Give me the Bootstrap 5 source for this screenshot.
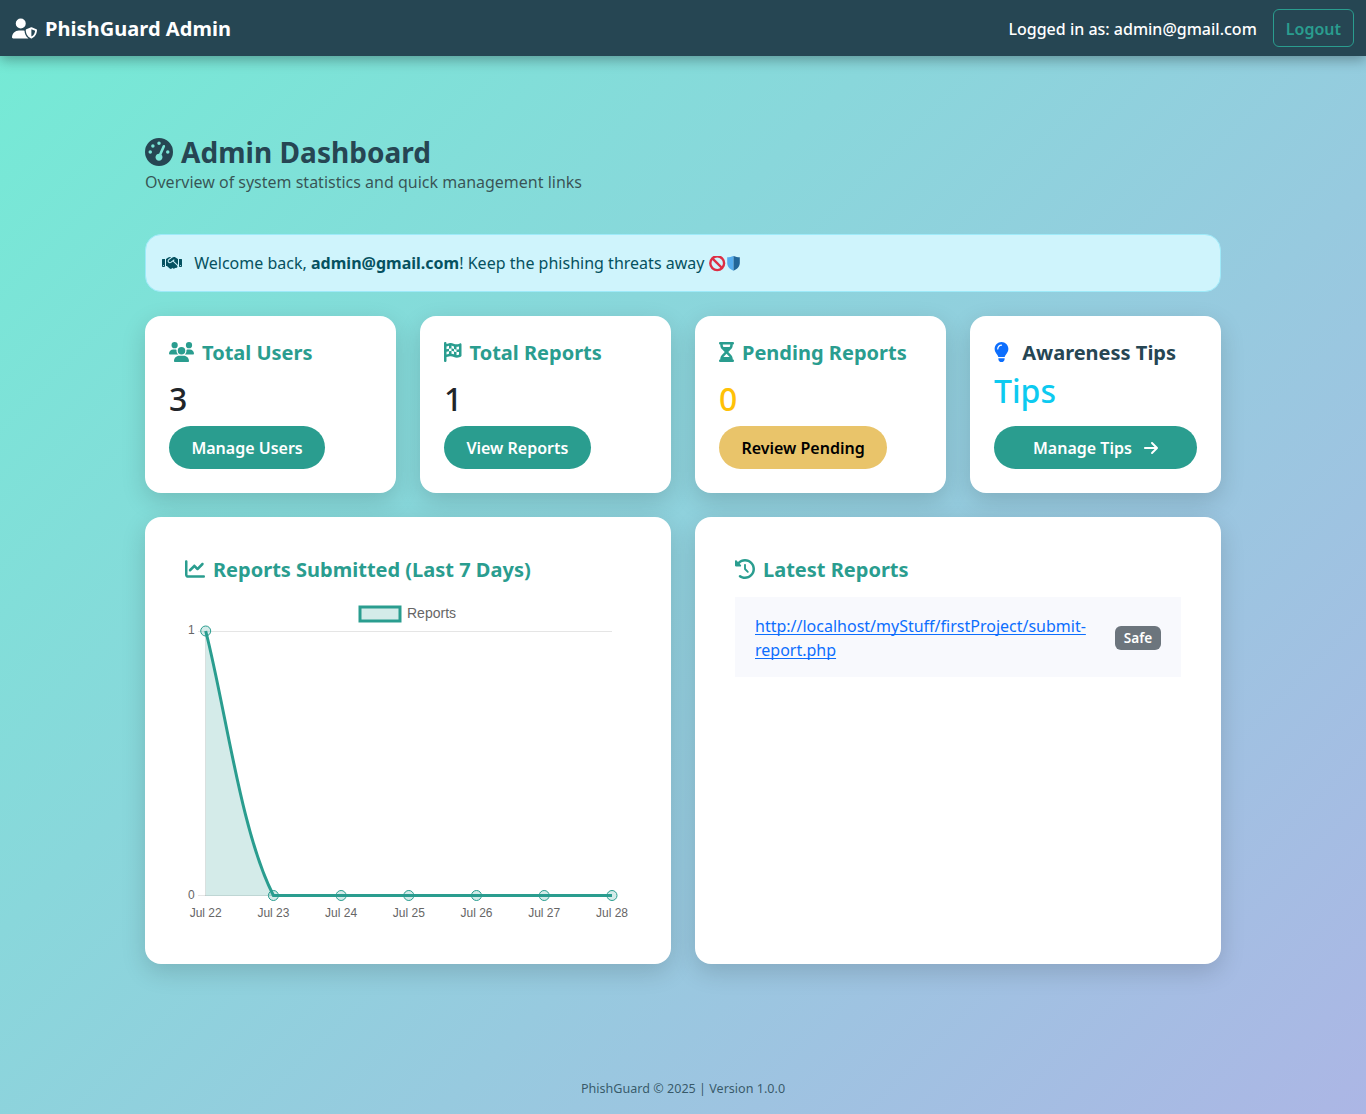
<!DOCTYPE html>
<html lang="en">
<head>
<meta charset="utf-8">
<meta name="viewport" content="width=device-width, initial-scale=1">
<title>PhishGuard Admin</title>
<link rel="stylesheet" href="https://cdn.jsdelivr.net/npm/bootstrap@5.3.0/dist/css/bootstrap.min.css">
<style>
  body { font-family: "Noto Sans", sans-serif; background: linear-gradient(135deg, #74ebd5, #acb6e5); min-height: 1114px; }
  .topbar { background: #264653; box-shadow: 0 4px 12px rgba(0,0,0,.3); height: 56px; }
  .topbar .navbar-brand { padding: 6px 0 4px; letter-spacing: .05px; }
  .topbar .fa { transform: translateY(-.5px); }
  .session-user { font-weight: 500; padding-top: 2px; }
  .fa { height: 1em; width: auto; fill: currentColor; vertical-align: -.125em; overflow: visible; display: inline-block; }
  h1 .fa { vertical-align: calc(-.125em + 1px); }
  h5 .fa { transform: translateY(-1px); }
  .emoji { height: 16px; width: auto; vertical-align: -3px; margin-left: .2px; }
  .btn-exit { color: #2a9d8f; border-color: #2a9d8f; font-weight: 600; padding-top: 7px; padding-bottom: 5px; }
  .page { max-width: 1100px; padding-top: 76px; }
  .page-title { color: #264653; font-size: 28px; font-weight: 700; line-height: 36px; margin: 0; padding-top: 2px; letter-spacing: .05px; }
  .subtitle { color: rgba(33,37,41,.75); margin-bottom: 40px; line-height: 24px; }
  .alert { border-radius: 16px; padding: 16px; margin-bottom: 24px; line-height: 24px; color: #055160; letter-spacing: .01px; }
  .panel { border: 0; border-radius: 16px; box-shadow: 0 8px 24px rgba(0,0,0,.15); padding: 24px; }
  .stat { height: 177px; }
  .tall { height: 447px; padding: 40px; }
  .panel h5 { color: #2a9d8f; font-weight: 700; font-size: 20px; line-height: 22px; height: 24px; padding-top: 2px; margin-bottom: 16px; white-space: nowrap; }
  .panel h5.tips-title { color: #264653; }
  .panel h2 { font-size: 32px; font-weight: 500; line-height: 38px; margin-bottom: 8px; }
  .btn-pill { height: 43px; border: 0; border-radius: 30px; padding: 0 22.4px; font-weight: 600; background: #2a9d8f; color: #fff; }
  .btn-gold { background: #e9c46a; color: #000; }
  .report { background: #f8f9fd; border: 0; padding: 17px 20px 15px; }
  .report a { text-decoration-skip-ink: none; text-underline-offset: 2px; text-decoration-thickness: 1px; }
  .safe-tag { font-size: 13.6px; font-weight: 600; }
  .chart text { font-family: "Liberation Sans", sans-serif; font-size: 12px; fill: #666; }
  footer { padding-top: 115px; font-size: 12.58px; line-height: 20px; color: rgba(38,70,83,.85); }
</style>
<script src="https://cdn.jsdelivr.net/npm/bootstrap@5.3.0/dist/js/bootstrap.bundle.min.js"></script>
</head>
<body>
<nav class="navbar topbar px-0">
  <div class="container-fluid">
    <a class="navbar-brand text-white fw-bold" href="#"><svg class="fa me-2" viewBox="0 0 640 512"><path d="M224 256A128 128 0 1 0 224 0a128 128 0 1 0 0 256zm-45.7 48C79.8 304 0 383.8 0 482.3C0 498.7 13.3 512 29.7 512l388.6 0c1.8 0 3.5-.2 5.3-.5c-76.3-55.1-99.8-141-103.1-200.2c-16.1-4.8-33.1-7.3-50.7-7.3l-91.4 0zm308.8-78.3l-120 48C358 277.4 352 286.2 352 296c0 63.3 25.9 168.8 134.8 214.2c5.9 2.5 12.6 2.5 18.5 0C614.1 464.8 640 359.3 640 296c0-9.8-6-18.6-15.1-22.3l-120-48c-5.7-2.3-12.1-2.3-17.8 0zM591.4 312c-3.9 50.7-27.2 116.7-95.4 149.7l0-187.8L591.4 312z"/></svg>PhishGuard Admin</a>
    <div class="d-flex align-items-center">
      <span class="text-white session-user me-3">Logged in as: admin@gmail.com</span>
      <a class="btn btn-exit" href="#">Logout</a>
    </div>
  </div>
</nav>

<main class="container page">
  <h1 class="page-title"><svg class="fa me-2" viewBox="0 0 512 512"><path d="M0 256a256 256 0 1 1 512 0A256 256 0 1 1 0 256zM288 96a32 32 0 1 0 -64 0 32 32 0 1 0 64 0zM256 416c35.3 0 64-28.7 64-64c0-17.4-6.9-33.1-18.1-44.6L366 161.7c5.3-12.1-.2-26.3-12.3-31.6s-26.3 .2-31.6 12.3L257.9 288c-.6 0-1.3 0-1.9 0c-35.3 0-64 28.7-64 64s28.7 64 64 64zM176 144a32 32 0 1 0 -64 0 32 32 0 1 0 64 0zM96 288a32 32 0 1 0 0-64 32 32 0 1 0 0 64zm352-32a32 32 0 1 0 -64 0 32 32 0 1 0 64 0z"/></svg>Admin Dashboard</h1>
  <p class="subtitle">Overview of system statistics and quick management links</p>

  <div class="alert alert-info"><svg class="fa me-2" viewBox="0 0 640 512"><path d="M323.4 85.2l-96.8 78.4c-16.1 13-19.2 36.4-7 53.1c12.9 17.8 38 21.3 55.3 7.8l99.3-77.2c7-5.4 17-4.2 22.5 2.8s4.2 17-2.8 22.5l-20.9 16.2L512 316.8 512 128l-.7 0-3.9-2.5L434.8 79c-15.3-9.8-33.2-15-51.4-15c-21.8 0-43 7.5-60 21.2zm22.8 124.4l-51.7 40.2C263 274.3 217.3 268 193.7 235.6c-22.2-30.5-16.6-73.1 12.7-96.8l83.2-67.3c-11.6-4.9-24.1-7.4-36.8-7.4C234 64 215.7 69.6 200 80l-72 48 0 224 28.2 0 91.4 83.4c19.6 17.9 49.9 16.5 67.8-3.1c5.5-6.1 9.2-13.2 11.1-20.6l17 15.6c19.5 17.9 49.9 16.6 67.8-2.9c4.5-4.9 7.8-10.6 9.9-16.5c19.4 13 45.8 10.3 62.1-7.5c17.9-19.5 16.6-49.9-2.9-67.8l-134.2-123zM16 128c-8.8 0-16 7.2-16 16L0 352c0 17.7 14.3 32 32 32l32 0c17.7 0 32-14.3 32-32l0-224-80 0zM48 320a16 16 0 1 1 0 32 16 16 0 1 1 0-32zM544 128l0 224c0 17.7 14.3 32 32 32l32 0c17.7 0 32-14.3 32-32l0-208c0-8.8-7.2-16-16-16l-80 0zm32 208a16 16 0 1 1 32 0 16 16 0 1 1 -32 0z"/></svg> Welcome back, <strong>admin@gmail.com</strong>! Keep the phishing threats away <svg class="emoji" viewBox="0 0 32 16"><g fill="none" stroke="#dd2e44" stroke-width="2.4"><circle cx="8.2" cy="7.2" r="6.9"/><path d="M3.4 2.4l9.6 9.6"/></g><path d="M24.5-.1c-2 1-4 1.300-6.300 1.300v5.500c0 3.800 2.300 6.200 6.300 8z" fill="#55acee"/><path d="M24.500-.1c2 1 4 1.300 6.300 1.300v5.500c0 3.800-2.300 6.200-6.300 8z" fill="#226699"/></svg></div>

  <div class="row g-4">
    <div class="col-3">
      <div class="card panel stat align-items-start">
        <h5><svg class="fa me-2" viewBox="0 0 640 512"><path d="M144 0a80 80 0 1 1 0 160A80 80 0 1 1 144 0zM512 0a80 80 0 1 1 0 160A80 80 0 1 1 512 0zM0 298.7C0 239.8 47.8 192 106.7 192l42.7 0c15.9 0 31 3.5 44.6 9.7c-1.3 7.2-1.9 14.7-1.9 22.3c0 38.2 16.8 72.5 43.3 96c-.2 0-.4 0-.7 0L21.3 320C9.6 320 0 310.4 0 298.7zM405.3 320c-.2 0-.4 0-.7 0c26.6-23.5 43.3-57.8 43.3-96c0-7.6-.7-15-1.9-22.3c13.6-6.3 28.7-9.7 44.6-9.7l42.7 0C592.2 192 640 239.8 640 298.7c0 11.8-9.6 21.3-21.3 21.3l-213.3 0zM224 224a96 96 0 1 1 192 0 96 96 0 1 1 -192 0zM128 485.3C128 411.7 187.7 352 261.3 352l117.3 0C452.3 352 512 411.7 512 485.3c0 14.7-11.9 26.7-26.7 26.7l-330.7 0c-14.7 0-26.7-11.9-26.7-26.7z"/></svg>Total Users</h5>
        <h2>3</h2>
        <button class="btn btn-pill">Manage Users</button>
      </div>
    </div>
    <div class="col-3">
      <div class="card panel stat align-items-start">
        <h5><svg class="fa me-2" viewBox="0 0 448 512"><path d="M32 0C49.7 0 64 14.3 64 32l0 16 69-17.2c38.1-9.5 78.3-5.1 113.5 12.5c46.3 23.2 100.8 23.2 147.1 0l9.6-4.8C423.8 28.1 448 43.1 448 66.1l0 279.7c0 13.3-8.3 25.3-20.8 30l-34.7 13c-46.2 17.3-97.6 14.6-141.7-7.4c-37.9-19-81.3-23.7-122.5-13.4L64 384l0 96c0 17.7-14.3 32-32 32s-32-14.3-32-32l0-80 0-66L0 64 0 32C0 14.3 14.3 0 32 0zM64 187.1l64-13.9 0 65.5L64 252.6 64 318l48.8-12.2c5.1-1.3 10.1-2.4 15.2-3.3l0-63.9 38.9-8.4c8.3-1.8 16.7-2.5 25.1-2.1l0-64c13.6 .4 27.2 2.6 40.4 6.4l23.6 6.9 0 66.7-41.7-12.3c-7.3-2.1-14.8-3.4-22.3-3.8l0 71.4c21.8 1.9 43.3 6.7 64 14.4l0-69.8 22.7 6.7c13.5 4 27.3 6.4 41.3 7.4l0-64.2c-7.8-.8-15.6-2.3-23.2-4.5l-40.8-12 0-62c-13-3.8-25.8-8.8-38.2-15c-8.2-4.1-16.9-7-25.8-8.8l0 72.4c-13-.4-26 .8-38.7 3.6L128 173.2 128 98 64 114l0 73.1zM320 335.7c16.8 1.5 33.9-.7 50-6.8l14-5.2 0-71.7-7.9 1.8c-18.4 4.3-37.3 5.7-56.1 4.5l0 77.4zm64-149.4l0-70.8c-20.9 6.1-42.4 9.1-64 9.1l0 69.4c13.9 1.4 28 .5 41.7-2.6l22.3-5.2z"/></svg>Total Reports</h5>
        <h2>1</h2>
        <button class="btn btn-pill">View Reports</button>
      </div>
    </div>
    <div class="col-3">
      <div class="card panel stat align-items-start">
        <h5><svg class="fa me-2" viewBox="0 0 384 512"><path d="M32 0C14.3 0 0 14.3 0 32S14.3 64 32 64l0 11c0 42.4 16.9 83.1 46.9 113.1L146.7 256 78.9 323.9C48.9 353.9 32 394.6 32 437l0 11c-17.7 0-32 14.3-32 32s14.3 32 32 32l32 0 256 0 32 0c17.7 0 32-14.3 32-32s-14.3-32-32-32l0-11c0-42.4-16.9-83.1-46.9-113.1L237.3 256l67.9-67.9c30-30 46.9-70.7 46.9-113.1l0-11c17.7 0 32-14.3 32-32s-14.3-32-32-32L320 0 64 0 32 0zM96 75l0-11 192 0 0 11c0 19-5.6 37.4-16 53L112 128c-10.3-15.6-16-34-16-53zm16 309c3.5-5.3 7.6-10.3 12.1-14.9L192 301.3l67.9 67.9c4.6 4.6 8.6 9.6 12.1 14.9L112 384z"/></svg>Pending Reports</h5>
        <h2 class="text-warning">0</h2>
        <button class="btn btn-pill btn-gold">Review Pending</button>
      </div>
    </div>
    <div class="col-3">
      <div class="card panel stat">
        <h5 class="tips-title mb-2"><svg class="fa me-2 text-primary" viewBox="0 0 384 512"><path d="M272 384c9.6-31.9 29.5-59.1 49.2-86.2c0 0 0 0 0 0c5.2-7.1 10.4-14.2 15.4-21.4c19.8-28.5 31.4-63 31.4-100.3C368 78.8 289.2 0 192 0S16 78.8 16 176c0 37.3 11.6 71.9 31.4 100.3c5 7.2 10.2 14.3 15.4 21.4c0 0 0 0 0 0c19.8 27.1 39.7 54.4 49.2 86.2l160 0zM192 512c44.2 0 80-35.8 80-80l0-16-160 0 0 16c0 44.2 35.8 80 80 80zM112 176c0 8.8-7.2 16-16 16s-16-7.2-16-16c0-61.9 50.1-112 112-112c8.8 0 16 7.2 16 16s-7.2 16-16 16c-44.2 0-80 35.8-80 80z"/></svg> Awareness Tips</h5>
        <h2 class="text-info mb-3">Tips</h2>
        <button class="btn btn-pill w-100">Manage Tips <svg class="fa ms-2" viewBox="0 0 448 512"><path d="M438.6 278.6c12.5-12.5 12.5-32.8 0-45.3l-160-160c-12.5-12.5-32.8-12.5-45.3 0s-12.5 32.8 0 45.3L338.8 224 32 224c-17.7 0-32 14.3-32 32s14.3 32 32 32l306.7 0L233.4 393.4c-12.5 12.5-12.5 32.8 0 45.3s32.8 12.5 45.3 0l160-160z"/></svg></button>
      </div>
    </div>

    <div class="col-6">
      <div class="card panel tall">
        <h5><svg class="fa me-2" viewBox="0 0 512 512"><path d="M64 64c0-17.7-14.3-32-32-32S0 46.3 0 64L0 400c0 44.2 35.8 80 80 80l400 0c17.7 0 32-14.3 32-32s-14.3-32-32-32L80 416c-8.8 0-16-7.2-16-16L64 64zm406.6 86.6c12.5-12.5 12.5-32.8 0-45.3s-32.8-12.5-45.3 0L320 210.7l-57.4-57.4c-12.5-12.5-32.8-12.5-45.3 0l-112 112c-12.5 12.5-12.5 32.8 0 45.3s32.8 12.5 45.3 0L240 221.3l57.4 57.4c12.5 12.5 32.8 12.5 45.3 0l128-128z"/></svg>Reports Submitted (Last 7 Days)</h5>
        <!-- x step 67.7 per day, y 34 = 1 report, y 298.5 = 0 reports -->
        <svg class="chart" width="446" height="326" viewBox="0 0 446 326">
          <g stroke="#000" stroke-opacity=".1"><path d="M13 34.5H427M13 298.5H427M20.5 34V299"/></g>
          <path d="M20.7 34C41 113.4 55.9 235 88.4 298.5V299H20.7Z" fill="#2a9d8f" fill-opacity=".2"/>
          <path d="M20.7 34C41 113.4 55.9 235 88.4 298.5H427" fill="none" stroke="#2a9d8f" stroke-width="3"/>
          <g fill="#2a9d8f" fill-opacity=".2" stroke="#2a9d8f">
            <circle cx="20.7" cy="34" r="5"/><circle cx="88.4" cy="298.5" r="5"/><circle cx="156.1" cy="298.5" r="5"/><circle cx="223.8" cy="298.5" r="5"/><circle cx="291.5" cy="298.5" r="5"/><circle cx="359.2" cy="298.5" r="5"/><circle cx="427" cy="298.5" r="5"/>
          </g>
          <rect x="175" y="10" width="40" height="14" fill="#2a9d8f" fill-opacity=".2" stroke="#2a9d8f" stroke-width="3"/>
          <text x="222" y="21" style="font-size:14px">Reports</text>
          <text x="3" y="37">1</text><text x="3" y="302">0</text>
          <g text-anchor="middle">
            <text x="20.7" y="320">Jul 22</text><text x="88.4" y="320">Jul 23</text><text x="156.1" y="320">Jul 24</text><text x="223.8" y="320">Jul 25</text><text x="291.5" y="320">Jul 26</text><text x="359.2" y="320">Jul 27</text><text x="427" y="320">Jul 28</text>
          </g>
        </svg>
      </div>
    </div>
    <div class="col-6">
      <div class="card panel tall">
        <h5><svg class="fa me-2" viewBox="0 0 512 512"><path d="M75 75L41 41C25.9 25.9 0 36.6 0 57.9L0 168c0 13.3 10.7 24 24 24l110.1 0c21.4 0 32.1-25.9 17-41l-30.8-30.8C155 85.5 203 64 256 64c106 0 192 86 192 192s-86 192-192 192c-40.8 0-78.6-12.7-109.7-34.4c-14.5-10.1-34.4-6.6-44.6 7.9s-6.6 34.4 7.9 44.6C151.2 495 201.7 512 256 512c141.4 0 256-114.6 256-256S397.4 0 256 0C185.3 0 121.3 28.7 75 75zm181 53c-13.3 0-24 10.7-24 24l0 104c0 6.4 2.5 12.5 7 17l72 72c9.4 9.4 24.6 9.4 33.9 0s9.4-24.6 0-33.9l-65-65 0-94.1c0-13.3-10.7-24-24-24z"/></svg>Latest Reports</h5>
        <ul class="list-group list-group-flush rounded-0">
          <li class="list-group-item report d-flex justify-content-between align-items-center">
            <a href="#">http://localhost/myStuff/firstProject/submit-report.php</a>
            <span class="badge bg-secondary safe-tag">Safe</span>
          </li>
        </ul>
      </div>
    </div>
  </div>
  <footer class="text-center">PhishGuard © 2025 | Version 1.0.0</footer>
</main>
</body>
</html>
